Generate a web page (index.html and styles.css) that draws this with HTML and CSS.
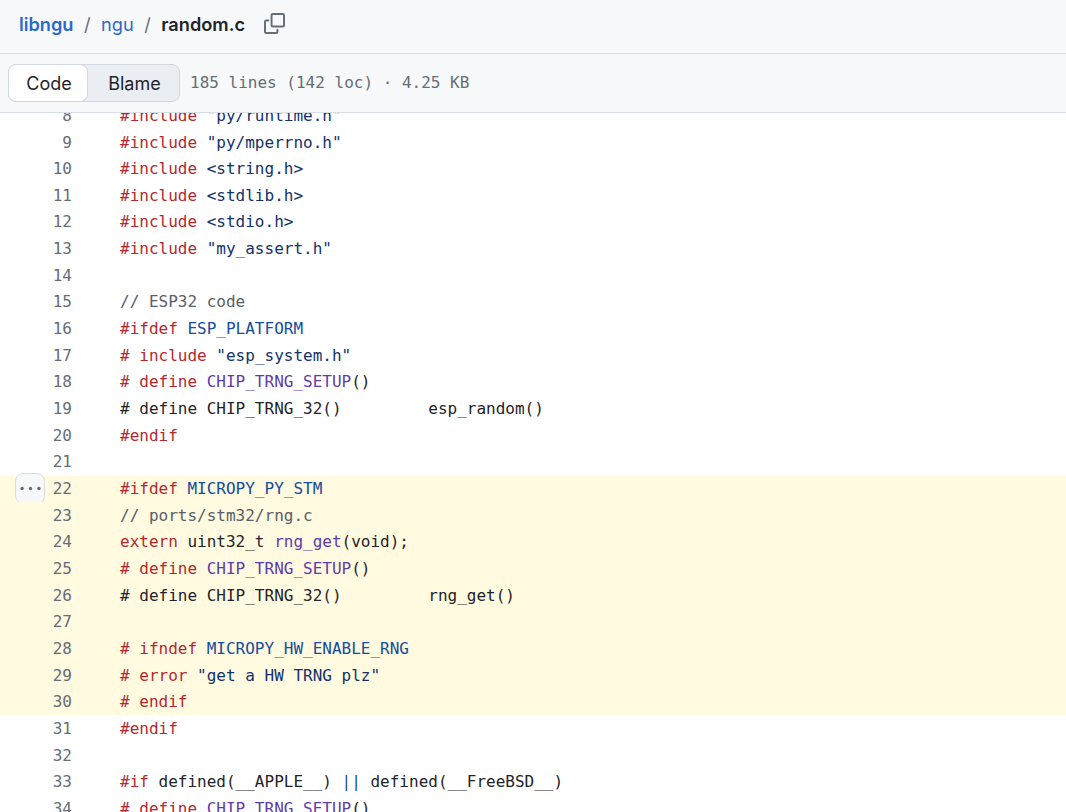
FILE: index.html
```html
<!DOCTYPE html>
<html lang="en">
<head>
    <meta charset="UTF-8">
    <title>random.c</title>
    <link rel="stylesheet" href="styles.css">
</head>
<body>
    <header class="file-header">
        <div class="breadcrumb">
            <a href="#" class="crumb-link">libngu</a>
            <span class="crumb-sep">/</span>
            <a href="#" class="crumb-link">ngu</a>
            <span class="crumb-sep">/</span>
            <strong class="crumb-file">random.c</strong>
            <button class="copy-btn" aria-label="Copy path">
                <svg viewBox="0 0 16 16" width="21" height="21" fill="currentColor">
                    <path d="M0 6.75C0 5.784.784 5 1.75 5h1.5a.75.75 0 0 1 0 1.5h-1.5a.25.25 0 0 0-.25.25v7.5c0 .138.112.25.25.25h7.5a.25.25 0 0 0 .25-.25v-1.5a.75.75 0 0 1 1.5 0v1.5A1.75 1.75 0 0 1 9.25 16h-7.5A1.75 1.75 0 0 1 0 14.25Z"/>
                    <path d="M5 1.75C5 .784 5.784 0 6.75 0h7.5C15.216 0 16 .784 16 1.75v7.5A1.75 1.75 0 0 1 14.25 11h-7.5A1.75 1.75 0 0 1 5 9.25Zm1.75-.25a.25.25 0 0 0-.25.25v7.5c0 .138.112.25.25.25h7.5a.25.25 0 0 0 .25-.25v-7.5a.25.25 0 0 0-.25-.25Z"/>
                </svg>
            </button>
        </div>
        <div class="toolbar">
            <div class="segmented">
                <span class="seg seg-active">Code</span>
                <span class="seg">Blame</span>
            </div>
            <span class="file-meta">185 lines (142 loc) · 4.25 KB</span>
        </div>
    </header>

    <main class="code-view">
        <div class="code-lines">
            <div class="row"><span class="num">8</span><code><span class="red">#include</span> <span class="str">"py/runtime.h"</span></code></div>
            <div class="row"><span class="num">9</span><code><span class="red">#include</span> <span class="str">"py/mperrno.h"</span></code></div>
            <div class="row"><span class="num">10</span><code><span class="red">#include</span> <span class="str">&lt;string.h&gt;</span></code></div>
            <div class="row"><span class="num">11</span><code><span class="red">#include</span> <span class="str">&lt;stdlib.h&gt;</span></code></div>
            <div class="row"><span class="num">12</span><code><span class="red">#include</span> <span class="str">&lt;stdio.h&gt;</span></code></div>
            <div class="row"><span class="num">13</span><code><span class="red">#include</span> <span class="str">"my_assert.h"</span></code></div>
            <div class="row"><span class="num">14</span><code></code></div>
            <div class="row"><span class="num">15</span><code><span class="gray">// ESP32 code</span></code></div>
            <div class="row"><span class="num">16</span><code><span class="red">#ifdef</span> <span class="blue">ESP_PLATFORM</span></code></div>
            <div class="row"><span class="num">17</span><code><span class="red"># include</span> <span class="str">"esp_system.h"</span></code></div>
            <div class="row"><span class="num">18</span><code><span class="red"># define</span> <span class="purple">CHIP_TRNG_SETUP</span>()</code></div>
            <div class="row"><span class="num">19</span><code># define CHIP_TRNG_32()         esp_random()</code></div>
            <div class="row"><span class="num">20</span><code><span class="red">#endif</span></code></div>
            <div class="row"><span class="num">21</span><code></code></div>
            <div class="row hl">
                <button class="more-btn" aria-label="More options">
                    <svg viewBox="0 0 16 16" width="21" height="21" fill="currentColor"><circle cx="1.6" cy="8" r="1.3"/><circle cx="8" cy="8" r="1.3"/><circle cx="14.4" cy="8" r="1.3"/></svg>
                </button>
                <span class="num">22</span><code><span class="red">#ifdef</span> <span class="blue">MICROPY_PY_STM</span></code>
            </div>
            <div class="row hl"><span class="num">23</span><code><span class="gray">// ports/stm32/rng.c</span></code></div>
            <div class="row hl"><span class="num">24</span><code><span class="red">extern</span> uint32_t <span class="purple">rng_get</span>(void);</code></div>
            <div class="row hl"><span class="num">25</span><code><span class="red"># define</span> <span class="purple">CHIP_TRNG_SETUP</span>()</code></div>
            <div class="row hl"><span class="num">26</span><code># define CHIP_TRNG_32()         rng_get()</code></div>
            <div class="row hl"><span class="num">27</span><code></code></div>
            <div class="row hl"><span class="num">28</span><code><span class="red"># ifndef</span> <span class="blue">MICROPY_HW_ENABLE_RNG</span></code></div>
            <div class="row hl"><span class="num">29</span><code><span class="red"># error</span> <span class="str">"get a HW TRNG plz"</span></code></div>
            <div class="row hl"><span class="num">30</span><code><span class="red"># endif</span></code></div>
            <div class="row"><span class="num">31</span><code><span class="red">#endif</span></code></div>
            <div class="row"><span class="num">32</span><code></code></div>
            <div class="row"><span class="num">33</span><code><span class="red">#if</span> defined(__APPLE__) <span class="blue">||</span> defined(__FreeBSD__)</code></div>
            <div class="row"><span class="num">34</span><code><span class="red"># define</span> <span class="purple">CHIP_TRNG_SETUP</span>()</code></div>
        </div>
    </main>
</body>
</html>
```

FILE: styles.css
```css
html, body {
    height: 100%;
}

body {
    margin: 0;
    height: 812px;
    overflow: hidden;
    display: flex;
    flex-direction: column;
    background-color: white;
    color: #1f2328;
    font-family: 'Inter', 'Liberation Sans', sans-serif;
}

/* header sits on top of the scrolled code */
.file-header {
    position: relative;
    z-index: 2;
    flex: none;
    background-color: #f6f8fa;
    border-bottom: 1px solid #d8dee4;
}

.breadcrumb {
    height: 54px;
    box-sizing: border-box;
    padding-left: 19px;
    padding-bottom: 6px;
    display: flex;
    align-items: center;
    border-bottom: 1px solid #d8dee4;
    font-size: 18.2px;
}

.crumb-link {
    color: #2c68c9;
    text-decoration: none;
}

.crumb-link:first-child {
    font-weight: 600;
}

.crumb-sep {
    color: #656d76;
    margin: 0 10.5px;
}

.crumb-file {
    font-weight: 600;
}

.copy-btn {
    border: none;
    background: none;
    padding: 0;
    margin-left: 18.5px;
    color: #656d76;
    display: flex;
}

.toolbar {
    height: 58px;
    padding-left: 8px;
    display: flex;
    align-items: center;
    gap: 10px;
}

.segmented {
    display: flex;
    height: 38px;
    box-sizing: border-box;
    background-color: #eaeef2;
    border: 1px solid #d0d7de;
    border-radius: 8px;
    font-size: 18px;
}

.seg {
    box-sizing: border-box;
    display: flex;
    align-items: center;
    justify-content: center;
    width: 91px;
    padding-left: 2px;
}

.seg-active {
    width: 80px;
    margin: -1px 0 -1px -1px;
    background-color: white;
    border: 1px solid #d0d7de;
    border-radius: 8px;
}

.file-meta {
    font-family: 'DejaVu Sans Mono', monospace;
    font-size: 16px;
    color: #656d76;
    padding-bottom: 2px;
}

.code-view {
    flex: 1;
    overflow: hidden;
}

/* list is scrolled so line 8 is cut by the header */
.code-lines {
    margin-top: -10.7px;
    font-family: 'DejaVu Sans Mono', monospace;
    font-size: 16px;
}

.row {
    position: relative;
    box-sizing: border-box;
    display: flex;
    align-items: center;
    height: 26.67px;
    padding-bottom: 0.6px;
}

.hl {
    background-color: #fffae0;
}

.num {
    width: 72px;
    text-align: right;
    color: #656d76;
    flex: none;
}

code {
    font-family: inherit;
    margin-left: 48px;
    white-space: pre;
}

.red { color: #b3282f; }
.str { color: #13326b; }
.blue { color: #154c9c; }
.purple { color: #5f3ba8; }
.gray { color: #57606a; }

.more-btn {
    position: absolute;
    left: 15px;
    top: -3px;
    width: 30px;
    height: 31px;
    padding: 0;
    display: flex;
    align-items: center;
    justify-content: center;
    color: #656d76;
    background-color: #f6f8fa;
    border: 1px solid #d8dee4;
    border-radius: 8px;
}
```
